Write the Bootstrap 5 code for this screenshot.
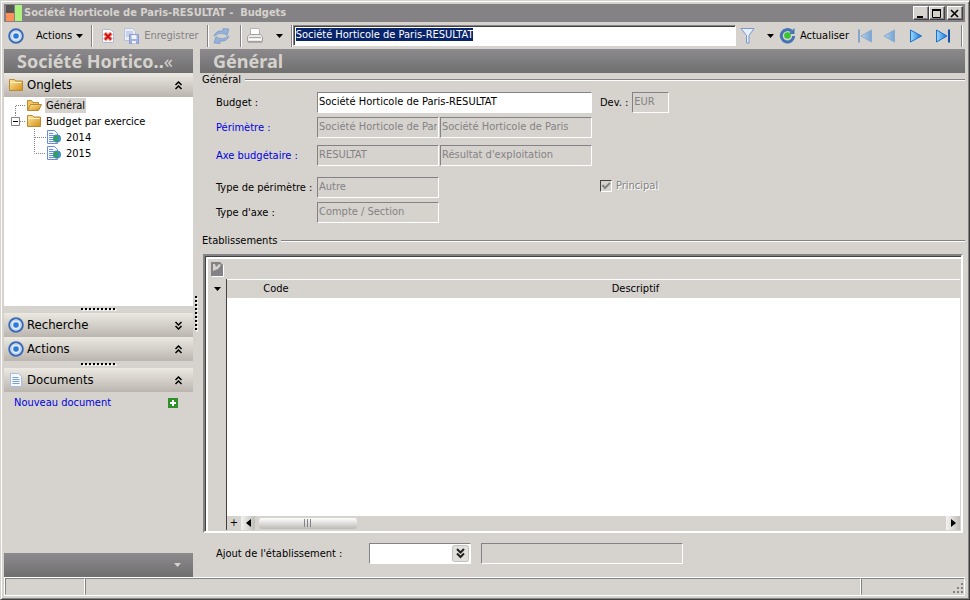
<!DOCTYPE html>
<html lang="fr">
<head>
<meta charset="utf-8">
<meta name="viewport" content="width=device-width, initial-scale=1">
<title>Société Horticole de Paris-RESULTAT - Budgets</title>
<link href="https://cdn.jsdelivr.net/npm/bootstrap@5.3.0/dist/css/bootstrap.min.css" rel="stylesheet">
<style>
:root { --face:#d6d3ce; --shade:#848284; --dark:#424142; --bar:linear-gradient(#8c8a8c,#706f70); --bevel:#848284 #fff #fff #848284; }
body { font-family:"DejaVu Sans Condensed","DejaVu Sans",sans-serif; font-size:11px; line-height:14px; color:#000; background:var(--face); }
button, input, select { font:inherit; color:inherit; }
svg { display:block; flex:none; }
a { color:#0000e0; text-decoration:none; }
.window { min-height:100vh; padding:3px 4px 3px 3px; border:1px solid; border-color:#d6d3ce #424142 #424142 #d6d3ce; box-shadow:inset 1px 1px #fff, inset -1px -1px #848284; }
.titlebar { height:18px; background:var(--shade); color:var(--face); font-weight:700; padding:0 2px; }
.titlebar h1 { font:inherit; }
.app-mark { margin-right:2px; }
.winbtn { width:16px; height:14px; padding:0; background:var(--face); border:1px solid; border-color:#fff #424142 #424142 #fff; box-shadow:inset -1px -1px #848284; }
.winbtn.closer { margin-left:2px; }
.tools { height:27px; padding-right:2px; }
.tool { border:0; padding:0; background:none; display:flex; align-items:center; }
.tool:disabled { color:#848284; }
.sep { width:2px; height:22px; border-left:1px solid #848284; border-right:1px solid #fff; }
.sep.spaced { margin-left:10px; }
.refresh { margin-left:5px; }
.field { height:21px; min-width:0; border:1px solid; border-color:var(--bevel); border-radius:0; background:#fff; padding:0 1px 3px; outline:0; }
.field:disabled { background:var(--face); color:#848284; opacity:1; }
.search { box-shadow:inset 1px 1px #424142; padding:0 2px 2px; }
.search::selection { background:#08246b; color:#fff; }
.side { width:189px; margin-right:7px; position:relative; }
.banner { height:24px; background:var(--bar); color:var(--face); font:700 18px/24px "Noto Sans","DejaVu Sans",sans-serif; padding:0 13px; white-space:nowrap; margin:0; }
.side .banner { padding-right:8px; }
.section-head { height:24px; width:100%; border:0; padding:0 10px 0 4px; background:linear-gradient(#ece8e2,#bab6af); font-size:13px; display:flex; align-items:center; gap:3px; text-align:left; }
.tree { background:#fff; height:209px; padding:0 0 0 10px; margin:0; list-style:none; }
.tree ul { list-style:none; padding:0; margin:0; }
.tree .node { display:flex; align-items:center; height:16px; }
.tree a { color:#000; padding:0 1px; margin-left:3px; line-height:15px; }
.tree a.chosen { background:var(--face); }
.grip { height:7px; display:flex; align-items:center; justify-content:center; }
.docs { padding:4px 15px 0 10px; }
.side-foot { height:24px; background:var(--bar); }
.vgrip { position:absolute; right:-5px; top:247px; }
.legend-row { display:flex; align-items:center; gap:4px; height:14px; margin:0; padding-left:2px; font-size:11px; }
.legend-row::after { content:""; flex:1; height:2px; background:#848284; border-bottom:1px solid #fff; }
.legend-row.second { margin-top:11px; }
.form-line { display:flex; padding-left:16px; margin-top:4px; }
.form-line.first { margin-top:5px; }
.form-line.axis { margin-top:7px; }
.form-line.kind { margin-top:11px; }
.form-line > label, .form-line > a { width:101px; padding-top:4px; white-space:nowrap; }
.wide { width:275px; } .half { width:122px; } .desc { width:152px; margin-left:1px; } .code { width:37px; }
.principal { margin-left:161px; padding-bottom:4px; }
.tick { appearance:none; width:12px; height:12px; margin:0; border:1px solid; border-color:#424142 #fff #fff #424142; background:url("data:image/svg+xml,%3Csvg xmlns='http://www.w3.org/2000/svg' viewBox='0 0 10 10'%3E%3Cpath d='M1.5 4l2.500 3L9 2' fill='none' stroke='%23848284' stroke-width='2'/%3E%3C/svg%3E"); }
.off { color:#848284; text-shadow:1px 1px #fff; }
.gridbox { margin:6px 2px 0 3px; border:2px solid; border-color:#848284 #fff #fff #848284; box-shadow:inset 1px 1px #424142, inset 3px 3px #fff; padding:3px 1px 1px 3px; }
.gridtools { height:20px; padding:3px; }
.gutter { width:19px; flex:none; border-right:1px solid #424142; }
.rows { width:100%; table-layout:fixed; }
.rows th { background:var(--face); height:18px; font-weight:400; text-align:center; border-top:1px solid #fff; padding:0 14px 0 0; }
.rows th:first-child { width:98px; padding:0; }
.scroller { height:14px; background:var(--face); }
.sbtn { width:14px; height:14px; border:0; padding:0; background:linear-gradient(90deg,#f4f3f1,#c0bdb8); display:flex; align-items:center; justify-content:center; }
.sbtn.plain { background:var(--face); }
.thumb { width:98px; height:11px; border-radius:3px; background:linear-gradient(#fff,#bdbab5); display:flex; justify-content:center; align-items:center; }
.form-line.add-line { margin-top:10px; padding-bottom:13px; }
.add-line > label { width:153px; }
.added { width:202px; margin-left:10px; }
.pick { position:relative; width:102px; }
.pick select { appearance:none; width:100%; }
.pick svg { position:absolute; right:2px; top:2px; pointer-events:none; }
.status { height:19px; border:1px solid #fff; border-width:1px 0 1px 1px; }
.status > div { border:1px solid; border-color:#848284 #fff transparent #848284; }
.s-first { width:80px; } .s-last { width:104px; }
</style>
<script src="https://cdn.jsdelivr.net/npm/bootstrap@5.3.0/dist/js/bootstrap.bundle.min.js"></script>
</head>
<body>
<svg width="0" height="0" class="position-absolute" aria-hidden="true">
  <defs>
    <linearGradient id="gold" x2="1" y2="1"><stop stop-color="#ffe9a3"/><stop offset="1" stop-color="#d58f10"/></linearGradient>
    <linearGradient id="azure" x2="1"><stop stop-color="#9bdcff"/><stop offset="1" stop-color="#1673dc"/></linearGradient>
  </defs>
  <symbol id="target" viewBox="0 0 16 16"><circle cx="8" cy="8" r="6.800" fill="#e6eefa" stroke="#3c6bb5" stroke-width="2"/><circle cx="8" cy="8" r="4.800" fill="none" stroke="#b9cfee"/><circle cx="8" cy="8" r="2.800" fill="#2b7bd6"/></symbol>
  <symbol id="folder" viewBox="0 0 16 16"><path d="M1.500 13.500v-11h5l1.500 1.500h6.500v9.500z" fill="url(#gold)" stroke="#b98a35"/><path d="M2.500 5.500h11" stroke="#fff3c4"/></symbol>
  <symbol id="folder-open" viewBox="0 0 16 16"><path d="M1.500 13V3.500h4l1.500 2h5.500V8" fill="#f1c65b" stroke="#b98a35"/><path d="M1.500 13.500l3-6h11l-3 6z" fill="url(#gold)" stroke="#b98a35"/></symbol>
  <symbol id="page" viewBox="0 0 16 16"><path d="M2.500 1.500h8l3 3v10h-11z" fill="#f4f8ff" stroke="#a9bcdf"/><path d="M4.500 5.500h6M4.500 7.500h7M4.500 9.500h7M4.500 11.500h7" stroke="#7e9bd4"/></symbol>
  <symbol id="webpage" viewBox="0 0 16 16"><path d="M1.500 1.500h7l3 3v10h-10z" fill="#f2f7ff" stroke="#6d8ccc"/><path d="M3 4.500h4M3 6.500h6M3 8.500h5M3 10.500h4M3 12.500h5" stroke="#6b92dc"/><circle cx="11" cy="9.500" r="4" fill="#3f8fca"/><path d="M8 7l3-1 2 2-2 2 1 3-2 .500-3-3z" fill="#3b9c60"/></symbol>
  <symbol id="up2" viewBox="0 0 9 9"><path d="M1.500 4L4.500 1l3 3M1.500 8L4.500 5l3 3" fill="none" stroke="#000" stroke-width="1.500"/></symbol>
  <symbol id="down2" viewBox="0 0 9 9"><path d="M1.500 1L4.500 4l3-3M1.500 5L4.500 8l3-3" fill="none" stroke="#000" stroke-width="1.500"/></symbol>
  <symbol id="caret" viewBox="0 0 7 4"><path d="M0 0h7L3.500 4z" fill="currentColor"/></symbol>
  <symbol id="dots" viewBox="0 0 36 3"><path d="M1.500 2h36" stroke="#fff" stroke-width="2" stroke-dasharray="2"/><path d="M0 1h36" stroke="#000" stroke-width="2" stroke-dasharray="2"/></symbol>
</svg>

<main class="window d-flex flex-column">
  <header class="titlebar d-flex align-items-center">
    <svg width="16" height="16" viewBox="0 0 16 16" class="app-mark"><path d="M0 0h8v8H0z" fill="#555"/><path d="M0 8h8v8H0z" fill="#ff8e58"/><path d="M9 0h7v16H9z" fill="#adf27c"/></svg>
    <h1 class="m-0 me-auto text-nowrap">Société Horticole de Paris-RESULTAT -&nbsp; Budgets</h1>
    <button class="winbtn" aria-label="Réduire"><svg width="13" height="11"><path d="M3 9h6" stroke="#000" stroke-width="2"/></svg></button>
    <button class="winbtn" aria-label="Agrandir"><svg width="13" height="11"><path d="M2.500 1v8.500h8V1M2 1.500h9" fill="none" stroke="#000"/><path d="M2 1h9v2H2z"/></svg></button>
    <button class="winbtn closer" aria-label="Fermer"><svg width="13" height="11"><path d="M3 2l7 7M10 2l-7 7" stroke="#000" stroke-width="1.600"/></svg></button>
  </header>

  <nav class="tools d-flex align-items-center" aria-label="Barre d'outils">
    <button class="tool" aria-label="Menu"><svg width="16" height="16" class="mx-1"><use href="#target"/></svg></button>
    <button class="tool gap-1 ms-1 ps-1">Actions <svg width="7" height="4"><use href="#caret"/></svg></button>
    <span class="sep ms-2 me-2"></span>
    <button class="tool" aria-label="Supprimer"><svg width="14" height="16" viewBox="0 0 14 16"><path d="M1.500 1.500h8l3 3v10h-11z" fill="#fff" stroke="#adb9d4"/><path d="M3.500 5l7 7M10.500 5l-7 7" stroke="#f29a92" stroke-width="4"/><path d="M4 5.500l6 6M10 5.500l-6 6" stroke="#cf1010" stroke-width="2"/></svg></button>
    <button class="tool gap-1 ms-2" disabled><svg width="17" height="16" viewBox="0 0 17 16"><path d="M1.500.500h8l3 3v9h-11z" fill="#e9edf6" stroke="#b6c2dc"/><path d="M3 4h7M3 6h7M3 8h7" stroke="#a7b6d8"/><path d="M6.500 6.500h9v9h-9z" fill="#9fb0dc" stroke="#8d9cc8"/><path d="M8.500 7h5v4h-5zM9 13h4v2.500H9z" fill="#f1f3fa"/></svg>Enregistrer</button>
    <span class="sep ms-2 me-1"></span>
    <button class="tool" aria-label="Rafraîchir"><svg width="17" height="16" viewBox="0 0 17 16" fill="#94b2da" stroke="#6d90c2" stroke-width=".6"><path d="M1 8Q3 2 10 3V.500l6 .500-2 6.500-2-1.500Q6 4 1 8z"/><path d="M16 8Q14 14 7 13v2.500L1 15l2-6.500L5 10q6 2 11-2z"/></svg></button>
    <span class="sep spaced me-1"></span>
    <button class="tool gap-2" aria-label="Imprimer"><svg width="18" height="18" viewBox="0 0 18 18"><path d="M4.500 8V1.500h8l1 1.500v5" fill="#fff" stroke="#b3b1b2"/><path d="M1.500 9.500l2-2h11l2 2v5h-15z" fill="#eceae8" stroke="#a3a1a1"/><path d="M3 10.500h12M2 15.500h14" stroke="#aaa"/><path d="M3 12.500h12" stroke="#fff"/></svg><svg width="7" height="4" class="ms-1"><use href="#caret"/></svg></button>
    <span class="sep ms-2"></span>
    <input class="field search flex-grow-1" id="record" aria-label="Enregistrement" value="Société Horticole de Paris-RESULTAT">
    <button class="tool ms-1" aria-label="Filtrer"><svg width="15" height="16" viewBox="0 0 15 16"><path d="M1 .500h13L9 7.500V15H6.500V7.500z" fill="#e5f0ff" stroke="#7a97d0"/></svg></button>
    <button class="tool ms-2 ps-1" aria-label="Options de filtre"><svg width="7" height="4"><use href="#caret"/></svg></button>
    <button class="tool gap-1 refresh"><svg width="17" height="17" viewBox="0 0 17 17"><path d="M12.500 4A6.200 6.200 0 1 0 14.700 9" fill="none" stroke="#4474b4" stroke-width="3"/><path d="M15.500 1v6H9.500z" fill="#4474b4"/><circle cx="8.500" cy="8.500" r="3.300" fill="#39c431"/></svg>Actualiser</button>
    <button class="tool ms-2" disabled aria-label="Premier"><svg width="16" height="16" viewBox="0 0 16 16" opacity=".5"><path d="M2 1.500v13" stroke="#3b74c5" stroke-width="2"/><path d="M14.500 2v12L4 8z" fill="url(#azure)" stroke="#3b82d6"/></svg></button>
    <button class="tool ms-2" disabled aria-label="Précédent"><svg width="16" height="16" viewBox="0 0 16 16" opacity=".5"><path d="M13.500 2v12L3 8z" fill="url(#azure)" stroke="#3b82d6"/></svg></button>
    <button class="tool ms-2 ps-1" aria-label="Suivant"><svg width="14" height="16" viewBox="0 0 14 16"><path d="M1.500 2v12L12.500 8z" fill="url(#azure)" stroke="#1f6ccc"/></svg></button>
    <button class="tool ms-2 ps-1" aria-label="Dernier"><svg width="16" height="16" viewBox="0 0 16 16"><path d="M1.500 2v12L12 8z" fill="url(#azure)" stroke="#1f6ccc"/><path d="M14 1.500v13" stroke="#1b53a8" stroke-width="2"/></svg></button>
    <span class="sep spaced"></span>
  </nav>

  <div class="d-flex flex-grow-1">
    <aside class="side d-flex flex-column flex-shrink-0">
      <h2 class="banner d-flex">Société Hortico..<span class="fw-normal">«</span></h2>
      <button class="section-head"><svg width="16" height="16"><use href="#folder"/></svg><span class="me-auto">Onglets</span><svg width="9" height="9"><use href="#up2"/></svg></button>
      <ul class="tree">
        <li class="node"><svg width="12" height="16"><path d="M1.500 16V8.500H12" fill="none" stroke="#848284" stroke-dasharray="1"/></svg><svg width="16" height="16"><use href="#folder-open"/></svg><a href="#" class="chosen">Général</a></li>
        <li>
          <div class="node"><svg width="12" height="16" viewBox="3 0 12 16" overflow="visible"><path d="M4.500 0v4M9 8.500h6" stroke="#848284" stroke-dasharray="1"/><path d="M.500 4.500h8v8h-8z" fill="#fff" stroke="#848284"/><path d="M2 8.500h5" stroke="#000"/></svg><svg width="16" height="16"><use href="#folder"/></svg><a href="#">Budget par exercice</a></div>
          <ul>
            <li class="node"><svg width="32" height="16"><path d="M20.500 0v16M21 8.500h11" stroke="#848284" stroke-dasharray="1"/></svg><svg width="16" height="16"><use href="#webpage"/></svg><a href="#">2014</a></li>
            <li class="node"><svg width="32" height="16"><path d="M20.500 0v8.500H32" fill="none" stroke="#848284" stroke-dasharray="1"/></svg><svg width="16" height="16"><use href="#webpage"/></svg><a href="#">2015</a></li>
          </ul>
        </li>
      </ul>
      <div class="grip"><svg width="36" height="3"><use href="#dots"/></svg></div>
      <button class="section-head"><svg width="16" height="16"><use href="#target"/></svg><span class="me-auto">Recherche</span><svg width="9" height="9"><use href="#down2"/></svg></button>
      <button class="section-head"><svg width="16" height="16"><use href="#target"/></svg><span class="me-auto">Actions</span><svg width="9" height="9"><use href="#up2"/></svg></button>
      <div class="grip"><svg width="36" height="3"><use href="#dots"/></svg></div>
      <button class="section-head"><svg width="16" height="16"><use href="#page"/></svg><span class="me-auto">Documents</span><svg width="9" height="9"><use href="#up2"/></svg></button>
      <div class="docs d-flex align-items-center"><a href="#" class="me-auto">Nouveau document</a><button class="tool" aria-label="Ajouter"><svg width="10" height="10"><path d="M0 0h10v10H0z" fill="#2f8f28"/><path d="M5 2v6M2 5h6" stroke="#fff" stroke-width="2"/></svg></button></div>
      <div class="side-foot mt-auto d-flex align-items-center justify-content-end px-2"><svg width="7" height="4" class="me-1" color="#d6d3ce"><use href="#caret"/></svg></div>
      <svg class="vgrip" width="3" height="36" viewBox="0 0 3 36"><path d="M2 1.500v36" stroke="#fff" stroke-width="2" stroke-dasharray="2"/><path d="M1 0v36" stroke="#000" stroke-width="2" stroke-dasharray="2"/></svg>
    </aside>

    <section class="flex-grow-1 d-flex flex-column">
      <h2 class="banner">Général</h2>
      <h3 class="legend-row">Général</h3>
      <div class="form-line first">
        <label for="budget">Budget :</label><input class="field wide" id="budget" value="Société Horticole de Paris-RESULTAT">
        <label for="dev" class="ms-2 w-auto me-1">Dev. :</label><input class="field code" id="dev" value="EUR" disabled>
      </div>
      <div class="form-line"><a href="#">Périmètre :</a><input class="field half" aria-label="Code du périmètre" value="Société Horticole de Paris" disabled><input class="field desc" aria-label="Périmètre" value="Société Horticole de Paris" disabled></div>
      <div class="form-line axis"><a href="#">Axe budgétaire :</a><input class="field half" aria-label="Code de l'axe" value="RESULTAT" disabled><input class="field desc" aria-label="Axe budgétaire" value="Résultat d'exploitation" disabled></div>
      <div class="form-line kind">
        <label for="ptype">Type de périmètre :</label><input class="field half" id="ptype" value="Autre" disabled>
        <div class="d-flex align-items-center principal"><input class="tick" type="checkbox" id="principal" checked disabled><label for="principal" class="off ms-1">Principal</label></div>
      </div>
      <div class="form-line"><label for="atype">Type d'axe :</label><input class="field half" id="atype" value="Compte / Section" disabled></div>

      <h3 class="legend-row second">Etablissements</h3>
      <div class="gridbox flex-grow-1 d-flex flex-column">
        <div class="gridtools"><button class="tool" disabled aria-label="Modifier"><svg width="13" height="15"><path d="M13 3v12H1" fill="none" stroke="#fff" stroke-width="2"/><path d="M0 0h9l3 3v11H0z" fill="#848284"/><path d="M2 2h2l1 3 3-3 2 1-3 4-5 2z" fill="#d6d3ce"/></svg></button></div>
        <div class="d-flex flex-grow-1">
          <div class="gutter"><button class="tool w-100 justify-content-center pt-2" aria-label="Menu des lignes"><svg width="7" height="4"><use href="#caret"/></svg></button></div>
          <div class="flex-grow-1 bg-white d-flex flex-column">
            <table class="rows"><thead><tr><th>Code</th><th>Descriptif</th></tr></thead></table>
            <div class="scroller d-flex align-items-center mt-auto">
              <button class="sbtn plain" aria-label="Ajouter une ligne">+</button>
              <button class="sbtn" aria-label="Défiler à gauche"><svg width="5" height="8"><path d="M5 0v8L0 4z"/></svg></button>
              <span class="thumb ms-1"><svg width="8" height="8"><path d="M.500 0v8M3.500 0v8M6.500 0v8" stroke="#848284"/></svg></span>
              <button class="sbtn ms-auto" aria-label="Défiler à droite"><svg width="5" height="8"><path d="M0 0v8l5-4z"/></svg></button>
            </div>
          </div>
        </div>
      </div>
      <div class="form-line add-line">
        <label for="etab">Ajout de l'établissement :</label>
        <div class="pick"><select class="field" id="etab"><option></option></select><svg width="17" height="17" viewBox="0 0 17 17"><rect x=".5" y=".5" width="16" height="16" rx="2" fill="#e2e0dc" stroke="#c4c1bc"/><path d="M5 4l3.500 3.500L12 4M5 8.500L8.500 12 12 8.500" fill="none" stroke="#222" stroke-width="2"/></svg></div>
        <input class="field added" aria-label="Nom de l'établissement" disabled>
      </div>
    </section>
  </div>

  <footer class="status d-flex">
    <div class="s-first"></div><div class="flex-grow-1"></div>
    <div class="s-last d-flex justify-content-end align-items-end"><svg width="12" height="12"><path d="M9 2h2M9 6h2M5 6h2M9 10h2M5 10h2M1 10h2" stroke="#848284" stroke-width="2"/></svg></div>
  </footer>
</main>
<script>
const record = document.getElementById('record');
record.focus();
record.select();
</script>
</body>
</html>
